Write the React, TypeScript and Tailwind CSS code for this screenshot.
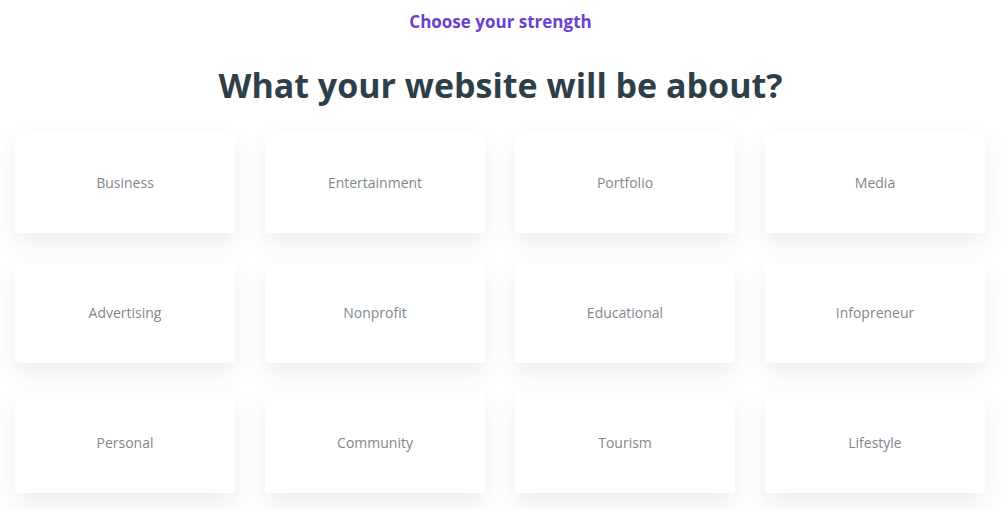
import React from "react";

const items = [
  "Business", "Entertainment", "Portfolio", "Media",
  "Advertising", "Nonprofit", "Educational", "Infopreneur",
  "Personal", "Community", "Tourism", "Lifestyle",
];

export default function App() {
  return (
    <div className="w-[1001px] h-[510px] bg-white overflow-hidden" style={{ fontFamily: "'Open Sans', 'Noto Sans', sans-serif" }}>
      <div className="pt-[10px] text-center text-[17px] font-bold leading-[24px] text-[#6a41cf]">Choose your strength</div>
      <h1 className="mt-[29px] text-center text-[34px] font-bold leading-[44px] text-[#2e3f4a]">What your website will be about?</h1>
      <div className="mt-[26px] pl-[15px] grid grid-cols-[repeat(4,220px)] gap-[30px]">
        {items.map((t) => (
          <div key={t} className="h-[100px] rounded-[3px] bg-white flex items-center justify-center pb-[2px] text-[14px] text-[#7f878e] shadow-[0_10px_24px_rgba(50,60,110,0.09)]">
            {t}
          </div>
        ))}
      </div>
    </div>
  );
}
